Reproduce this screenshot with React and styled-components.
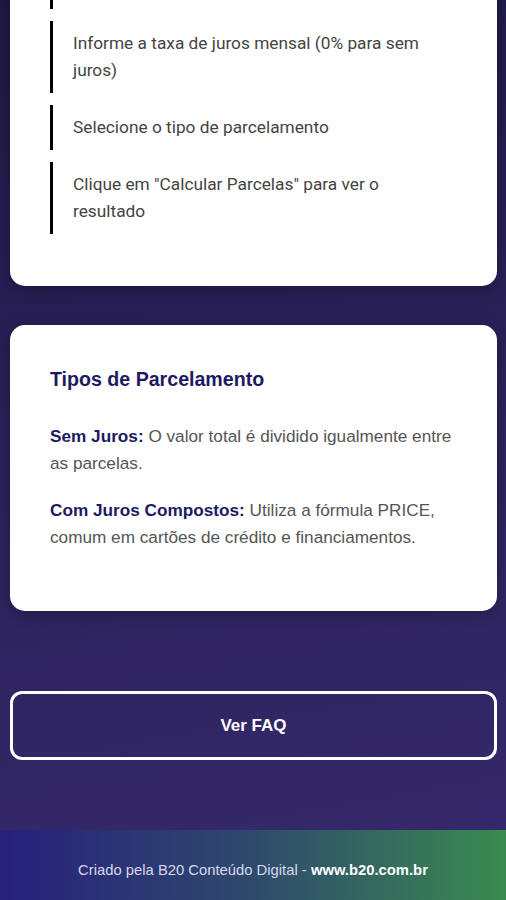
import styled, { createGlobalStyle } from "styled-components";

const GlobalStyle = createGlobalStyle({
  "*": { boxSizing: "border-box" },
  body: {
    margin: 0,
    background: "linear-gradient(170deg, #1e1945 0%, #2a2158 45%, #372a6e 100%)",
    fontFamily: '"Liberation Sans", Arial, sans-serif',
  },
});

const Page = styled.div({
  minHeight: "100vh",
  display: "flex",
  flexDirection: "column",
  overflow: "hidden",
});

const Main = styled.main({
  display: "flex",
  flexDirection: "column",
  gap: "39px",
  padding: "0 9px 0 10px",
  marginTop: "-76px",
});

const Card = styled.section({
  background: "#ffffff",
  borderRadius: "15px",
  padding: "40px",
  boxShadow: "0 4px 14px rgba(0, 0, 0, 0.25)",
});

const Steps = styled.ul({
  listStyle: "none",
  margin: 0,
  padding: 0,
});

const Step = styled.li({
  borderLeft: "3px solid #000",
  padding: "9px 12px 9px 20px",
  marginBottom: "12px",
  fontFamily: "Roboto, sans-serif",
  fontSize: "17.3px",
  lineHeight: "27px",
  color: "#444",
});

const CardTitle = styled.h3({
  margin: "0 0 30px",
  fontSize: "19.6px",
  lineHeight: "28px",
  fontWeight: 700,
  color: "#1d1a63",
});

const Text = styled.p({
  margin: "0 0 20px",
  fontSize: "17.2px",
  lineHeight: "27px",
  color: "#555",
});

const Term = styled.strong({
  color: "#1d1a63",
});

const FaqButton = styled.button({
  marginTop: "41px",
  height: "69px",
  background: "transparent",
  border: "3px solid #ffffff",
  borderRadius: "12px",
  color: "#ffffff",
  fontFamily: '"Liberation Sans", Arial, sans-serif',
  fontSize: "17px",
  fontWeight: 700,
  cursor: "pointer",
});

const Footer = styled.footer({
  marginTop: "70px",
  height: "70px",
  display: "flex",
  alignItems: "center",
  justifyContent: "center",
  paddingTop: "10px",
  background: "linear-gradient(90deg, #27207c 0%, #2f4a6c 50%, #3a8a50 100%)",
  color: "#d8d8ee",
  fontSize: "14.8px",
});

const FooterLink = styled.strong({
  color: "#ffffff",
});

export default function App() {
  return (
    <Page>
      <GlobalStyle />
      <Main>
        <Card>
          <Steps>
            <Step>Escolha o número de parcelas</Step>
            <Step>Informe a taxa de juros mensal (0% para sem juros)</Step>
            <Step>Selecione o tipo de parcelamento</Step>
            <Step>Clique em "Calcular Parcelas" para ver o resultado</Step>
          </Steps>
        </Card>
        <Card>
          <CardTitle>Tipos de Parcelamento</CardTitle>
          <Text>
            <Term>Sem Juros:</Term> O valor total é dividido igualmente entre as parcelas.
          </Text>
          <Text>
            <Term>Com Juros Compostos:</Term> Utiliza a fórmula PRICE, comum em cartões de
            crédito e financiamentos.
          </Text>
        </Card>
        <FaqButton>Ver FAQ</FaqButton>
      </Main>
      <Footer>
        <span>
          Criado pela B20 Conteúdo Digital - <FooterLink>www.b20.com.br</FooterLink>
        </span>
      </Footer>
    </Page>
  );
}
